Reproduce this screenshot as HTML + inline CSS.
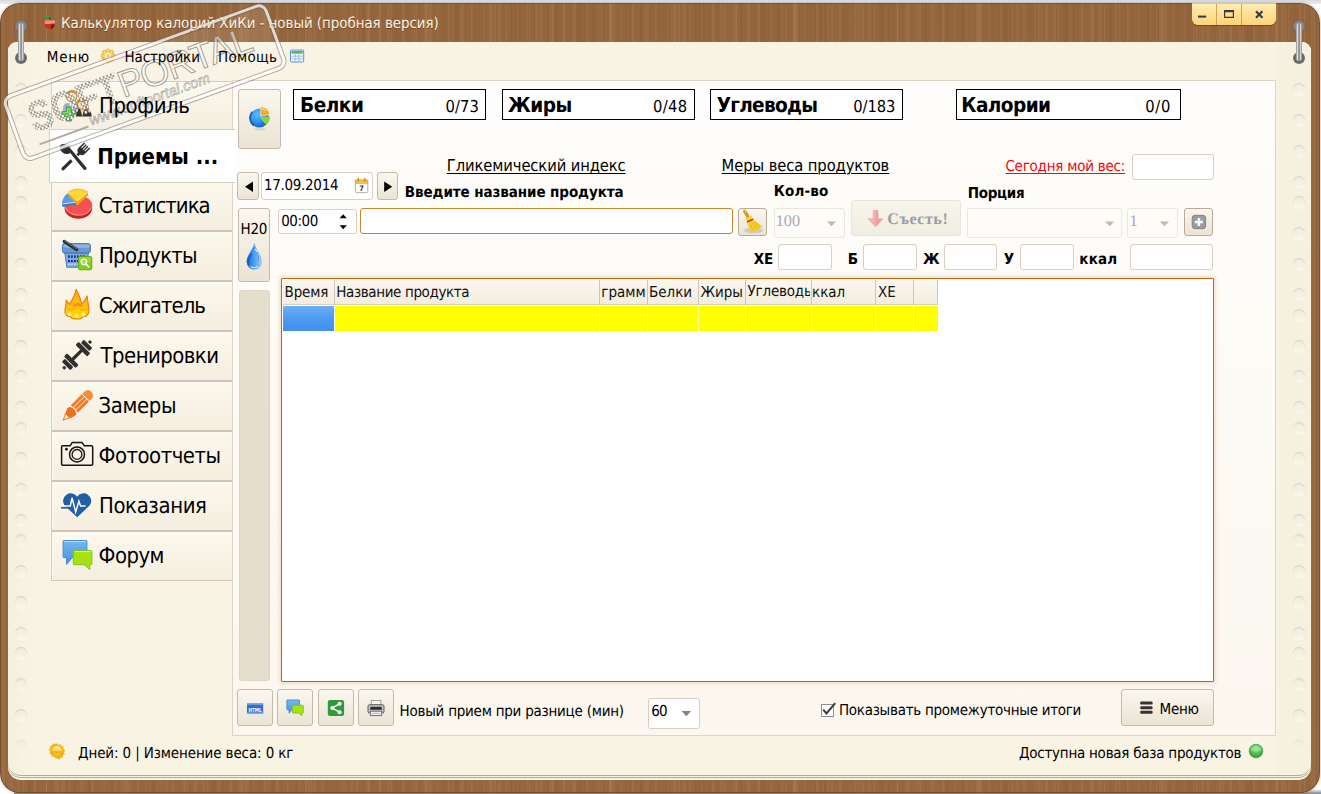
<!DOCTYPE html>
<html lang="ru"><head><meta charset="utf-8"><title>Калькулятор калорий ХиКи</title>
<style>
html,body{margin:0;padding:0}
body{width:1321px;height:794px;position:relative;overflow:hidden;background:#fff;font-family:"DejaVu Sans Condensed","DejaVu Sans","Liberation Sans",sans-serif;font-size:14.5px;color:#000;text-rendering:geometricPrecision}
.a{position:absolute;box-sizing:border-box}
.t{position:absolute;white-space:nowrap}
#win{left:0;top:3px;width:1320px;height:789.5px;border-radius:20px;
 background:
 repeating-linear-gradient(90deg,rgba(255,225,175,.07) 0 1px,transparent 1px 5px,rgba(70,35,10,.05) 5px 6px,transparent 6px 11px,rgba(255,225,175,.06) 11px 13px,transparent 13px 19px,rgba(70,35,10,.045) 19px 20px,transparent 20px 23px),
 repeating-linear-gradient(90deg,rgba(70,35,10,.05) 0 2px,transparent 2px 9px,rgba(255,225,175,.07) 9px 10px,transparent 10px 17px,rgba(255,225,175,.05) 17px 20px,transparent 20px 29px,rgba(70,35,10,.04) 29px 31px,transparent 31px 37px),
 repeating-linear-gradient(90deg,rgba(255,225,175,.05) 0 5px,transparent 5px 27px,rgba(70,35,10,.045) 27px 33px,transparent 33px 61px),
 linear-gradient(#95663D,#96683F);
 box-shadow:inset 1px 0 0 rgba(70,40,15,.45),inset -1px 0 0 rgba(70,40,15,.35),inset 0 -1px 0 rgba(70,40,15,.4),inset 0 1px 0 rgba(70,40,15,.35),0 0 3px rgba(60,60,80,.45)}
.sheet{left:8px;top:42px;width:1303px;background:#F6F1E0}
.dim{position:absolute;width:12px;height:12px;border-radius:50%;background:linear-gradient(#EFEBDD 0,#F3EFE2 35%,#F5F1E5 70%,#FBF8EF 100%);box-shadow:inset 0 1px 1px rgba(170,160,135,.35),0 1px 0 rgba(255,255,255,.6)}
.tab{position:absolute;left:51px;width:181px;height:50px;box-sizing:border-box;border:1px solid #CEC4BC;border-left-color:#D3CBC3;border-right:none;background:linear-gradient(#FBF8EC,#F5EEDF);box-shadow:inset 1px 1px 0 #FCFAF2,-1px 0 0 rgba(255,255,255,.35)}
.btn{position:absolute;box-sizing:border-box;border:1px solid #C4B9AC;border-radius:3px;background:linear-gradient(#FAF7EE,#EBE4D4)}
.fld{position:absolute;box-sizing:border-box;border:1px solid #D9CEC3;border-radius:3px;background:#fff}
.dis{position:absolute;box-sizing:border-box;border:1px solid #ECE7DD;border-radius:3px;background:#FDFCF9}
.box{position:absolute;box-sizing:border-box;border:1px solid #000;background:#fff}
.vd{position:absolute;top:280px;width:1px;height:25px;background:#CFC5B8}
.yd{position:absolute;top:306px;width:1px;height:25px;background:#FFFF8C}

</style></head>
<body>
<div class="a" style="left:0;top:0;width:1321px;height:4px;background:linear-gradient(#dadada,#ececec)"></div>
<div class="a" style="left:14px;top:789px;width:1307px;height:5px;background:linear-gradient(#fff 0,#bdbdc0 55%,#8e8e92 80%)"></div>
<div class="a" id="win"></div>
<div class="a sheet" style="height:738px;border-radius:9px 9px 13px 13px"></div>
<div class="a sheet" style="height:736px;border-radius:9px 9px 13px 13px;border-bottom:1px solid #B3AB9B"></div>
<div class="a sheet" style="height:733.7px;border-radius:9px 9px 13px 13px;border-bottom:1px solid #B3AB9B;background:linear-gradient(90deg,#F5F0DE 0,#F8F3E3 30px,#F8F3E3 1268px,#F6F0DF 1272px)"></div>
<div class="a" style="left:15px;top:20px;width:12px;height:12px;border-radius:50%;background:radial-gradient(#7c7c7c 0,#858585 55%,#6a5a48 100%);box-shadow:0 0 1px #4a3018"></div>
<div class="a" style="left:15px;top:52px;width:12px;height:12px;border-radius:50%;background:radial-gradient(#5e5e5e 0,#6b6b6b 60%,#8f8a80 100%)"></div>
<div class="a" style="left:18px;top:23px;width:6px;height:38px;border-radius:3px;background:linear-gradient(90deg,#7d7d7d 0,#e6e6e6 22%,#a0a0a0 42%,#6f6f6f 52%,#dedede 72%,#8a8a8a 100%)"></div>
<div class="a" style="left:1293px;top:20px;width:12px;height:12px;border-radius:50%;background:radial-gradient(#7c7c7c 0,#858585 55%,#6a5a48 100%);box-shadow:0 0 1px #4a3018"></div>
<div class="a" style="left:1293px;top:52px;width:12px;height:12px;border-radius:50%;background:radial-gradient(#5e5e5e 0,#6b6b6b 60%,#8f8a80 100%)"></div>
<div class="a" style="left:1296px;top:23px;width:6px;height:38px;border-radius:3px;background:linear-gradient(90deg,#7d7d7d 0,#e6e6e6 22%,#a0a0a0 42%,#6f6f6f 52%,#dedede 72%,#8a8a8a 100%)"></div>
<div class="dim" style="left:15px;top:82.8px"></div>
<div class="dim" style="left:15px;top:113.7px"></div>
<div class="dim" style="left:15px;top:144.6px"></div>
<div class="dim" style="left:15px;top:175.5px"></div>
<div class="dim" style="left:15px;top:195.7px"></div>
<div class="dim" style="left:15px;top:226.6px"></div>
<div class="dim" style="left:15px;top:257.5px"></div>
<div class="dim" style="left:15px;top:288.4px"></div>
<div class="dim" style="left:15px;top:308.6px"></div>
<div class="dim" style="left:15px;top:339.5px"></div>
<div class="dim" style="left:15px;top:370.4px"></div>
<div class="dim" style="left:15px;top:401.3px"></div>
<div class="dim" style="left:15px;top:421.5px"></div>
<div class="dim" style="left:15px;top:452.4px"></div>
<div class="dim" style="left:15px;top:483.3px"></div>
<div class="dim" style="left:15px;top:514.2px"></div>
<div class="dim" style="left:15px;top:534.4px"></div>
<div class="dim" style="left:15px;top:565.3px"></div>
<div class="dim" style="left:15px;top:596.2px"></div>
<div class="dim" style="left:15px;top:627.1px"></div>
<div class="dim" style="left:15px;top:647.3px"></div>
<div class="dim" style="left:15px;top:678.2px"></div>
<div class="dim" style="left:15px;top:709.1px"></div>
<div class="dim" style="left:15px;top:740.0px;opacity:.45"></div>
<div class="dim" style="left:1293px;top:82.8px"></div>
<div class="dim" style="left:1293px;top:113.7px"></div>
<div class="dim" style="left:1293px;top:144.6px"></div>
<div class="dim" style="left:1293px;top:175.5px"></div>
<div class="dim" style="left:1293px;top:195.7px"></div>
<div class="dim" style="left:1293px;top:226.6px"></div>
<div class="dim" style="left:1293px;top:257.5px"></div>
<div class="dim" style="left:1293px;top:288.4px"></div>
<div class="dim" style="left:1293px;top:308.6px"></div>
<div class="dim" style="left:1293px;top:339.5px"></div>
<div class="dim" style="left:1293px;top:370.4px"></div>
<div class="dim" style="left:1293px;top:401.3px"></div>
<div class="dim" style="left:1293px;top:421.5px"></div>
<div class="dim" style="left:1293px;top:452.4px"></div>
<div class="dim" style="left:1293px;top:483.3px"></div>
<div class="dim" style="left:1293px;top:514.2px"></div>
<div class="dim" style="left:1293px;top:534.4px"></div>
<div class="dim" style="left:1293px;top:565.3px"></div>
<div class="dim" style="left:1293px;top:596.2px"></div>
<div class="dim" style="left:1293px;top:627.1px"></div>
<div class="dim" style="left:1293px;top:647.3px"></div>
<div class="dim" style="left:1293px;top:678.2px"></div>
<div class="dim" style="left:1293px;top:709.1px"></div>
<div class="dim" style="left:1293px;top:740.0px;opacity:.45"></div>
<div class="a" style="left:1191.5px;top:3px;width:84px;height:22px;border-radius:0 0 6px 6px;background:linear-gradient(#FFEDB4,#FFE08F 55%,#FBD27C);box-shadow:0 1px 0 rgba(90,55,20,.55),inset 0 1px 0 rgba(120,80,30,.25)"></div>
<div class="a" style="left:1216px;top:4px;width:1px;height:21px;background:#C9A460"></div>
<div class="a" style="left:1241.4px;top:4px;width:1px;height:21px;background:#C9A460"></div>
<div class="a" style="left:232px;top:79.5px;width:1043.5px;height:656px;background:linear-gradient(#FEFDFB,#FDFBF6 40%,#FBF7EF);border:1px solid #DED4C6"></div>
<div class="tab" style="top:81px"></div>
<div class="tab" style="top:181px"></div>
<div class="tab" style="top:231px"></div>
<div class="tab" style="top:281px"></div>
<div class="tab" style="top:331px"></div>
<div class="tab" style="top:381px"></div>
<div class="tab" style="top:431px"></div>
<div class="tab" style="top:481px"></div>
<div class="tab" style="top:531px"></div>
<div class="a" style="left:48.8px;top:128.8px;width:186px;height:53.8px;background:#fff;border:1px solid #D6CCBF;border-right:none"></div>
<div class="btn" style="left:238px;top:89px;width:42.5px;height:59.5px"></div>
<div class="box" style="left:292.9px;top:89.2px;width:193.0px;height:30.8px"></div>
<div class="box" style="left:502.3px;top:89.2px;width:192.5px;height:30.8px"></div>
<div class="box" style="left:710px;top:89.2px;width:193.1px;height:30.8px"></div>
<div class="box" style="left:956.1px;top:89.2px;width:224.8px;height:30.8px"></div>
<div class="fld" style="left:1132.3px;top:154.2px;width:81.4px;height:25.5px"></div>
<div class="btn" style="left:237.2px;top:172.2px;width:21.6px;height:27.6px"></div>
<div class="fld" style="left:261.2px;top:172.2px;width:111.8px;height:27.6px"></div>
<div class="btn" style="left:376.6px;top:172.2px;width:21px;height:27.6px"></div>
<div class="btn" style="left:238.2px;top:208.2px;width:31.4px;height:73.4px"></div>
<div class="fld" style="left:278.3px;top:208.5px;width:79px;height:25.3px"></div>
<div class="a" style="left:360.2px;top:208.4px;width:373.3px;height:25.5px;background:#fff;border:1.3px solid #C9842F;border-radius:3px"></div>
<div class="btn" style="left:738.1px;top:208px;width:29px;height:28px;border-color:#B9AB9B"></div>
<div class="dis" style="left:773.5px;top:208.1px;width:71px;height:30.3px"></div>
<div class="a" style="left:851.1px;top:199.6px;width:109.5px;height:36px;background:linear-gradient(#F7F4EB,#F2EDE2);border:1px solid #E9E4DA;border-radius:3px"></div>
<div class="dis" style="left:966.5px;top:208.1px;width:155.8px;height:30.3px"></div>
<div class="dis" style="left:1127.2px;top:208.1px;width:50.6px;height:30.3px"></div>
<div class="btn" style="left:1184px;top:208px;width:28.8px;height:27.8px;border-color:#B9AB9B"></div>
<div class="fld" style="left:778.3px;top:244px;width:53.5px;height:25.6px"></div>
<div class="fld" style="left:863px;top:244px;width:53.8px;height:25.6px"></div>
<div class="fld" style="left:944.2px;top:244px;width:53.2px;height:25.6px"></div>
<div class="fld" style="left:1020px;top:244px;width:53.7px;height:25.6px"></div>
<div class="fld" style="left:1130px;top:244px;width:82.8px;height:25.6px"></div>
<div class="a" style="left:239px;top:290.4px;width:30.6px;height:391px;background:#E5DECD;border:1px solid #DDD5C4;border-radius:3px"></div>
<div class="a" style="left:281px;top:278px;width:933px;height:404px;background:#fff;border:1px solid #C4660F;border-radius:1px;box-shadow:0 0 4px 1px rgba(228,150,90,.38)"></div>
<div class="a" style="left:283px;top:280px;width:654.5px;height:25.3px;background:linear-gradient(#FAF7EE,#F3EDDF);border-bottom:1px solid #D9D0C2"></div>
<div class="vd" style="left:334px"></div>
<div class="vd" style="left:599.3px"></div>
<div class="vd" style="left:647px"></div>
<div class="vd" style="left:698.3px"></div>
<div class="vd" style="left:745.2px"></div>
<div class="vd" style="left:810.6px"></div>
<div class="vd" style="left:875.2px"></div>
<div class="vd" style="left:913.3px"></div>
<div class="vd" style="left:937px"></div>
<div class="a" style="left:283px;top:306px;width:51px;height:25px;background:linear-gradient(#6DB0F6,#4E9CF1 45%,#3F90EE)"></div>
<div class="a" style="left:335px;top:306px;width:602.5px;height:25px;background:#FFFF00"></div>
<div class="yd" style="left:599.3px"></div>
<div class="yd" style="left:647px"></div>
<div class="yd" style="left:698.3px"></div>
<div class="yd" style="left:745.2px"></div>
<div class="yd" style="left:810.6px"></div>
<div class="yd" style="left:875.2px"></div>
<div class="yd" style="left:913.3px"></div>
<div class="a" style="left:747px;top:283px;width:63.3px;height:20px;overflow:hidden"><span class="t" style="left:.6px;top:1.3px;font-size:15px;line-height:15px;letter-spacing:-.2px;color:#111">Углеводы</span></div>
<div class="btn" style="left:237.2px;top:689.3px;width:35.4px;height:36.5px"></div>
<div class="btn" style="left:277.3px;top:689.3px;width:35.4px;height:36.5px"></div>
<div class="btn" style="left:318.4px;top:689.3px;width:35.2px;height:36.5px"></div>
<div class="btn" style="left:358.3px;top:689.3px;width:35.4px;height:36.5px"></div>
<div class="fld" style="left:648.4px;top:698.4px;width:51.2px;height:30.2px"></div>
<div class="a" style="left:821px;top:704px;width:13px;height:13px;background:#fff;border:1px solid #8E8E8E"></div>
<div class="btn" style="left:1121.3px;top:689.3px;width:92.8px;height:36.5px"></div><svg class="a" style="left:0;top:0" width="1321" height="794" viewBox="0 0 1321 794">
<defs>
<linearGradient id="gFlame" x1="0" y1="0" x2="0" y2="1"><stop offset="0" stop-color="#FFA80C"/><stop offset=".6" stop-color="#FFBE10"/><stop offset="1" stop-color="#FFE000"/></linearGradient>
<linearGradient id="gBlueB" x1="0" y1="0" x2="0" y2="1"><stop offset="0" stop-color="#73B7F2"/><stop offset="1" stop-color="#4893DD"/></linearGradient>
<radialGradient id="gPie" cx=".4" cy=".3" r=".8"><stop offset="0" stop-color="#63BBFF"/><stop offset=".55" stop-color="#2590F5"/><stop offset="1" stop-color="#0E50B5"/></radialGradient>
<linearGradient id="gDrop" x1="0" y1="0" x2="1" y2="0"><stop offset="0" stop-color="#1565D8"/><stop offset=".5" stop-color="#4CA0F0"/><stop offset="1" stop-color="#9BD0F8"/></linearGradient>
<radialGradient id="gDot" cx=".5" cy=".3" r=".7"><stop offset="0" stop-color="#9BE59B"/><stop offset=".5" stop-color="#5DC25D"/><stop offset="1" stop-color="#2F9238"/></radialGradient>
<linearGradient id="gSun" x1="0" y1="0" x2="0" y2="1"><stop offset="0" stop-color="#FFF0A0"/><stop offset=".5" stop-color="#FFD84A"/><stop offset=".55" stop-color="#F2B010"/><stop offset="1" stop-color="#F8C838"/></linearGradient>
</defs>

<!-- window control glyphs -->
<g fill="#37384A" stroke="none">
<rect x="1198" y="15.6" width="8.2" height="2"/>
<path d="M1224 10h10v8h-10zM1225.2 12.2v4.6h7.6v-4.6z" fill-rule="evenodd"/>
<path d="M1255.2 11.9l1.5-1.5 2.5 2.5 2.5-2.5 1.5 1.5-2.5 2.5 2.5 2.5-1.5 1.5-2.5-2.5-2.5 2.5-1.5-1.5 2.5-2.5z"/>
</g>

<!-- apple -->
<path d="M43.6 16.4q2.6-2.4 5.6-.8 1.600 1.200 1.300 3.200-4.200.6-6.900-2.400z" fill="#2EA336"/>
<path d="M50.300 19.800l-.9-2.600" stroke="#4a3018" stroke-width="1" fill="none"/>
<path d="M44 21.500q0-1.600 1.800-1.600h7.600q1.800 0 1.800 1.600 0 5.600-3.300 7.200h-4.600q-3.300-1.600-3.300-7.200z" fill="#C2361E"/>
<path d="M44.600 20.300h6.600v3.600h-6.400z" fill="#F58A86"/>
<path d="M51.200 20.300h3.700v3.200h-3.700z" fill="#D6A98B"/>
<path d="M51 24.500h4q-.6 3-2.600 4.200h-2.200q1.200-2 .8-4.200z" fill="#8E1410"/>

<!-- gear/flower menu icon -->
<g transform="translate(108,55.800)">
<g fill="#FAD978" stroke="#E2A227" stroke-width=".8">
<circle cx="0" cy="-5" r="1.900"/><circle cx="3.540" cy="-3.540" r="1.900"/><circle cx="5" cy="0" r="1.900"/><circle cx="3.540" cy="3.540" r="1.900"/>
<circle cx="0" cy="5" r="1.900"/><circle cx="-3.540" cy="3.540" r="1.900"/><circle cx="-5" cy="0" r="1.900"/><circle cx="-3.540" cy="-3.540" r="1.900"/>
</g>
<circle r="4.200" fill="#F7D060"/>
<circle r="2.700" fill="#FFFDF4"/>
<circle r="1.200" fill="#FFF6E0" stroke="#E8923A" stroke-width=".8"/>
</g>

<!-- table menu icon -->
<rect x="290.500" y="50" width="13.200" height="12" rx="1" fill="#EEF5FF" stroke="#5C93DD" stroke-width="1"/>
<rect x="291.500" y="51" width="11.200" height="2.600" fill="#58B65A"/>
<path d="M291.500 56.200h11.200M291.500 58.800h11.200M295.200 54v7.500M299 54v7.500" stroke="#8DB6EA" stroke-width=".8" fill="none"/>

<!-- profile icon -->
<path d="M63 114v-5.500q0-5.500 5.500-5.500h6q4.500 0 5 4v7z" fill="#95A3DA"/>
<path d="M69.500 103h5l-1 8h-3z" fill="#F3F3F8"/>
<circle cx="71.600" cy="96.500" r="5.200" fill="#F8E6CF" stroke="#BF8A38" stroke-width="1.200"/>
<path d="M66.200 96q.5-6 5.800-6.200 5 .2 5.400 6-2.600-3.200-5.600-3-3 .2-5.600 3.200z" fill="#C68A2E"/>
<path d="M73.500 116.500q.2-8 6.500-8h4.500q6.800 0 7.300 8z" fill="#1C1C1C"/>
<circle cx="82.300" cy="104.300" r="5" fill="#F6DDBF" stroke="#B07A2A" stroke-width="1.300"/>
<path d="M76.500 107q-1.200-9 5.800-9.200 7 .2 6 9.200-1-5.200-6-5.400-4.800.2-5.800 5.400z" fill="#BC842C"/>
<path d="M76.200 105.500q-1.500 3 .3 5.500l2-1.500zM88.400 105.500q1.500 3-.3 5.500l-2-1.500z" fill="#A8742A"/>
<path d="M80.300 109.300h4l-2 7.200z" fill="#F5CB7A"/>
<path d="M66.500 106.800h5v4.700h4.700v4.800h-4.700v4.700h-5v-4.700h-4.600v-4.800h4.600z" fill="#43BC3C" stroke="#2C8E2A" stroke-width=".8"/>
<path d="M67.600 108v4.700h-4.500M69 108v12" stroke="#9BE87E" stroke-width=".9" fill="none" opacity=".8"/>

<!-- spoon & fork -->
<g fill="#2E2E2E" stroke="none">
<ellipse cx="65.300" cy="149" rx="6.200" ry="4.300" transform="rotate(38 65.300 149)"/>
<path d="M68.200 150.600l2.300-2.200 15.600 18.800q1 1.600-.2 2.500-1.300.8-2.500-.4z"/>
<g transform="translate(77,154.900) rotate(45)">
<path d="M-.9 0v-2.500q-3-.8-3-4.500v-8h1.500v6.200h1v-6.200h1.400v6.200h1v-6.200h1.400v6.200h1v-6.200h1.500v8q0 3.700-3 4.500v2.500z" transform="scale(1 .92)"/>
<path d="M-1.600 7.600h3.200v12.300q0 1.400-1.600 1.400-1.600 0-1.600-1.400z"/>
</g>
</g>
<path d="M60.500 148.300l9.800-3.600" stroke="#777" stroke-width="2" fill="none" opacity=".75"/>

<!-- statistics pie -->
<ellipse cx="78.400" cy="208.300" rx="13.800" ry="10.400" fill="#CF2020"/>
<ellipse cx="78.400" cy="205.600" rx="13.800" ry="10" fill="#F45252"/>
<path d="M65.500 207.500q3 7.500 13 7.700 10-.2 13-7.700" fill="none" stroke="#FFC0B8" stroke-width=".8" opacity=".8"/>
<path d="M58 190H88.500V192.500L77 203.800 58 206z" fill="#F8F3E6"/>
<path d="M62.200 205.500q-.4-7 5.200-11.800l9.400 8v3l-14.300 2.300z" fill="#3F7CC6"/>
<path d="M62.200 203.600q0-6 5.200-10.200l9.400 8.300-14.600 2z" fill="#5A9DE0"/>
<path d="M63 203.900l13.800-1.900" stroke="#DDEBFA" stroke-width=".9" fill="none"/>
<path d="M68.300 192.300l9 8.500 10.700-8.500v3.200l-10.700 10-9-10z" fill="#F3A21C"/>
<path d="M68.300 192.300q9.500-6.600 19.700 0l-10.700 9.500z" fill="#FFD62A"/>
<path d="M68.800 192.500l8.500 8.300 10.200-8.300" stroke="#FFF3B0" stroke-width=".7" fill="none"/>
<path d="M68.600 192q9.400-5.800 19.200 0" stroke="#F7A51E" stroke-width=".8" fill="none"/>

<!-- products basket -->
<path d="M64.800 253h23.600l-2 14.300h-19.600z" fill="#7FAADF" stroke="#4A79B6" stroke-width=".9"/>
<g fill="#27348E">
<rect x="68" y="255.300" width="1.800" height="2.600"/><rect x="71" y="255.300" width="1.800" height="2.600"/><rect x="74" y="255.300" width="1.800" height="2.600"/><rect x="77" y="255.300" width="1.800" height="2.600"/><rect x="80" y="255.300" width="1.800" height="2.600"/><rect x="83" y="255.300" width="1.800" height="2.600"/>
<rect x="68" y="260" width="1.800" height="2.200" fill="#1A1FA0"/><rect x="71" y="260" width="1.800" height="2.200" fill="#1A1FA0"/><rect x="74" y="260" width="1.800" height="2.200" fill="#1A1FA0"/><rect x="77" y="260" width="1.800" height="2.200" fill="#1A1FA0"/>
</g>
<g fill="#E4EDF9"><rect x="68" y="263.600" width="1.800" height="1.200"/><rect x="71" y="263.600" width="1.800" height="1.200"/><rect x="74" y="263.600" width="1.800" height="1.200"/><rect x="77" y="263.600" width="1.800" height="1.200"/></g>
<rect x="62.400" y="243.600" width="28" height="9.400" rx="2.200" fill="#6898D0" stroke="#3F6FAE" stroke-width=".9"/>
<rect x="63.400" y="244.600" width="26" height="3.200" rx="1.400" fill="#8DB5E6"/>
<path d="M64.200 241.400l12.600 8.200" stroke="#2B2B2B" stroke-width="3.200" stroke-linecap="round" fill="none"/>
<path d="M64.600 240.800l12.400 8.100" stroke="#8C8C8C" stroke-width=".8" stroke-linecap="round" fill="none"/>
<rect x="78.400" y="256.400" width="13.400" height="13.400" rx="1.600" fill="#80CC18" stroke="#5EA612" stroke-width=".9"/>
<rect x="79.300" y="257.300" width="11.600" height="5.200" fill="#9ADB34" opacity=".8"/>
<circle cx="83.900" cy="261.900" r="2.700" fill="#A4DE50" stroke="#fff" stroke-width="1.300"/>
<path d="M86 264.100l2.900 2.900" stroke="#fff" stroke-width="1.600" stroke-linecap="round"/>

<!-- flame -->
<path d="M76.200 318.700c-3.600.8-5.800-1-5.700-2.500-3.200 1.200-6-2-5.500-6.200.5-4 1.600-6 1-9.800l3.600 3.900c2.500-4 5.400-8.800 6.500-14.900 2.700 5 4.800 10.700 5.800 15 2-2 4-5 5.200-8.200.4 6 2.300 10 1.800 15-.4 4-3 6.500-5.600 5.200-.5 1.900-3.500 3.300-7.100 2.500z" fill="url(#gFlame)" stroke="#EA7C0E" stroke-width="1.100" stroke-linejoin="round"/>
<path d="M72 307c2-3 4-4.500 6.500-4 2.500.8 3.500 2.700 5 3-2 1-3.500.5-5 0-2-.6-3.500.2-6.500 1z" fill="#F48A12" opacity=".85"/>
<path d="M68 309c3 1.200 5 .8 7 0M80 309.500c2 .8 4 .5 6-.5" stroke="#F59A18" stroke-width="1" fill="none" opacity=".8"/>
<circle cx="69.600" cy="314.300" r="2" fill="#FFF27A"/><circle cx="76.400" cy="316" r="2.100" fill="#FFF27A"/><circle cx="83.400" cy="314.600" r="2" fill="#FFF27A"/>

<!-- dumbbell -->
<g transform="translate(77.100,354.900) rotate(-45)" fill="#2F2F2F">
<rect x="-6.500" y="-1.600" width="13" height="3.200"/>
<rect x="6" y="-8.200" width="4.400" height="16.400" rx="1.100"/><rect x="-10.400" y="-8.200" width="4.400" height="16.400" rx="1.100"/>
<rect x="11.300" y="-6" width="4.300" height="12" rx="1.100"/><rect x="-15.600" y="-6" width="4.300" height="12" rx="1.100"/>
<rect x="16.700" y="-1.600" width="3" height="3.200" rx=".9"/><rect x="-19.700" y="-1.600" width="3" height="3.200" rx=".9"/>
</g>

<!-- pencil -->
<g transform="translate(77,406.300) rotate(-45)">
<path d="M-20.500 0l9.500-4.400q3-1.300 5.200-.6 1.600 2.600 1.600 5t-1.600 5q-2.200.7-5.200-.6z" fill="#EE701C"/>
<path d="M-18.300 0l4.600-2.100v4.200z" fill="#FFF6EA"/>
<rect x="-3.600" y="-5.100" width="15.400" height="3" fill="#F17C24"/>
<rect x="-2.800" y="-1.500" width="14.600" height="3" fill="#F17C24"/>
<rect x="-3.600" y="2.100" width="15.400" height="3" fill="#F17C24"/>
<path d="M12.700-5.100h2.700a5.100 5.100 0 0 1 0 10.200h-2.700z" fill="#F78B3C"/>
</g>

<!-- camera -->
<g fill="none" stroke="#141414" stroke-width="1.500" stroke-linejoin="round">
<path d="M62.800 445.800h7.200l2.200-3.200h9.900l2.200 3.200h7.200q1.200 0 1.200 1.200v17q0 1.200-1.200 1.200h-28.700q-1.200 0-1.200-1.200v-17q0-1.200 1.200-1.200z"/>
<circle cx="77" cy="454.400" r="7.500"/><circle cx="77" cy="454.400" r="4.900" stroke-width="1.300"/>
</g>
<circle cx="66.400" cy="449.200" r="1.400" fill="#141414"/>

<!-- heart -->
<path d="M77.150 517.300l-12.700-12a7.500 7.500 0 1 1 12.700-8.600 7.500 7.500 0 1 1 12.700 8.600z" fill="#1F5FA6"/>
<path d="M61 507.800h8" stroke="#1F5FA6" stroke-width="1.700" fill="none"/>
<path d="M63.500 506.100h6.800l1.700-8.300 3.700 14.200 3.200-10.800 1.700 4.900h5" stroke="#FCF8EE" stroke-width="1.500" fill="none" stroke-linejoin="miter"/>

<!-- forum -->
<path d="M64 540.500h22q.9 0 .9.900v15.400q0 .9-.9.900h-13.800l-5.700 6.800v-6.800h-2.500q-.9 0-.9-.9v-15.400q0-.9.900-.9z" fill="url(#gBlueB)" stroke="#3B86D2" stroke-width=".9"/>
<path d="M64.300 541.600h21.400" stroke="#CFE5FA" stroke-width=".8"/>
<path d="M74.200 550.500h16.800q.9 0 .9.900v12.400q0 .9-.9.900h-1.300v4.900l-5.600-4.900h-9.900q-.9 0-.9-.9v-12.400q0-.9.900-.9z" fill="#A7E112" stroke="#7DBE20" stroke-width=".9"/>
<path d="M74.400 551.600h16.300" stroke="#E4F7A8" stroke-width=".8"/>

<!-- pie button icon -->
<ellipse cx="259.800" cy="129.300" rx="6" ry="1" fill="#bbb" opacity=".5"/>
<circle cx="259.300" cy="118.100" r="9.500" fill="url(#gPie)"/>
<path d="M252.300 111.700a9.500 9.500 0 0 0 1.500 14" stroke="#0B3FA0" stroke-width="1.500" fill="none" opacity=".8"/>
<path d="M259.800 117.300l10-1a9.500 9.500 0 0 1-3.600 8.600z" fill="#8CD630"/>
<path d="M260.600 116.200l.3-9.700q7 .8 9.100 7.900z" fill="#F7A822" stroke="#F4F0E2" stroke-width=".7"/>
<path d="M262 108.200l3.500 2.600" stroke="#FFD980" stroke-width="1.200"/>

<!-- prev/next arrows -->
<path d="M253 181.600v10.400l-8-5.200z" fill="#000"/>
<path d="M384.200 181.600v10.400l8-5.200z" fill="#000"/>
<!-- calendar icon -->
<rect x="355.400" y="180" width="12.400" height="12.600" rx="1" fill="#fff" stroke="#A9A9A9" stroke-width=".9"/>
<rect x="355.400" y="180" width="12.400" height="3.400" fill="#F6C244" stroke="#D9A02A" stroke-width=".6"/>
<path d="M358.300 178.200v3M364.900 178.200v3" stroke="#C88A1E" stroke-width="1.300" stroke-linecap="round"/>
<text x="361.600" y="191.300" font-family="'DejaVu Sans Condensed','DejaVu Sans',sans-serif" font-size="7.500" font-weight="700" text-anchor="middle" fill="#3A3A3A">7</text>

<!-- spinner -->
<path d="M339.600 218.300l3.600-4.100 3.600 4.100zM339.600 225.200l3.600 4.100 3.600-4.100z" fill="#000"/>

<!-- water drop -->
<path d="M254.300 242.800c1 7 7.700 12 7.700 18.900a7.700 7.700 0 0 1-15.400 0c0-6.900 6.700-11.900 7.700-18.900z" fill="url(#gDrop)"/>
<path d="M249 264.800c-2.200-4 .5-8 3-11" stroke="#0E4FC0" stroke-width="1.400" fill="none" opacity=".7"/>
<path d="M255.300 249c2.500 4 4.400 7.800 3.600 12.800" stroke="#E8F5FF" stroke-width="1.200" fill="none" opacity=".9"/>
<path d="M250.500 266.500q3.500 2.200 7.500 0" stroke="#D8EEFF" stroke-width="1.100" fill="none" opacity=".9"/>
<path d="M256.600 252c1.800 3.500 2.600 6.500 2 9.500" stroke="#0E50B8" stroke-width=".8" fill="none" opacity=".8"/>

<!-- broom -->
<ellipse cx="753.500" cy="230.300" rx="9.500" ry="3" fill="#9a9a9a" opacity=".35"/>
<path d="M744.700 211.200l3.300 5.600" stroke="#D9941E" stroke-width="3.300" stroke-linecap="round"/>
<path d="M744.900 210.800l1 1.600" stroke="#F6D890" stroke-width="1" stroke-linecap="round"/>
<path d="M745.300 218.500l6-3 1.600 3.100-6.100 2.600z" fill="#F5D232"/>
<path d="M746.800 221.200l6.100-2.600.7 1.500-6.200 2.800z" fill="#D5281A"/>
<path d="M747.400 222.900l6.200-2.800 8.700 6.200q-4.500 5-12.200 5z" fill="#F4CE28"/>
<path d="M750.500 224l2.500 6.500M753 222.800l4 6.500M755.500 222.600l4.500 5" stroke="#F0A21A" stroke-width=".7" fill="none" opacity=".8"/>

<!-- combo arrows -->
<path d="M826.900 221.400h9.200l-4.600 4.800zM1105 221.400h9.400l-4.700 4.800zM1159.800 221.400h9.300l-4.650 4.800z" fill="#BEBCAC"/>
<path d="M681.600 711h9.500l-4.750 5.300z" fill="#8D8171"/>
<!-- eat arrow -->
<path d="M872.900 210.200h5.400v8.300h5.200l-7.900 8.700-7.900-8.700h5.200z" fill="#F19CA0"/>
<path d="M872.900 210.200h2.700v17l-7.900-8.700h5.200z" fill="#F5B0B3"/>
<!-- plus button -->
<rect x="1192.200" y="215.300" width="13.400" height="13.400" rx="2.600" fill="#9C9C9C" stroke="#7C7C7C" stroke-width=".9"/>
<path d="M1197.600 218h2.600v2.700h2.700v2.600h-2.700v2.700h-2.600v-2.700h-2.700v-2.600h2.700z" fill="#F2FAFB"/>

<!-- bottom toolbar icons -->
<rect x="247" y="703.100" width="16.200" height="11" rx=".8" fill="#2E6FD2"/>
<rect x="247" y="703.100" width="16.200" height="1.600" fill="#7FB0F0"/><rect x="247" y="712.500" width="16.200" height="1.600" fill="#7FB0F0"/>
<text x="255.100" y="711.600" font-family="'DejaVu Sans Condensed','DejaVu Sans',sans-serif" font-size="5.600" font-weight="700" text-anchor="middle" textLength="13.200" lengthAdjust="spacingAndGlyphs" fill="#fff">HTML</text>

<path d="M287.400 699.900h11.600q.6 0 .6.600v8.600q0 .6-.6.600h-7l-3 3.500v-3.500h-1.600q-.6 0-.6-.6v-8.600q0-.6.600-.6z" fill="url(#gBlueB)" stroke="#3B86D2" stroke-width=".8"/>
<path d="M293 705.300h9.800q.6 0 .6.600v6.600q0 .6-.6.600h-.9v2.800l-3.200-2.800h-5.700q-.6 0-.6-.6v-6.600q0-.6.600-.6z" fill="#A7E112" stroke="#7DBE20" stroke-width=".8"/>

<rect x="327.800" y="700.100" width="16.300" height="15.800" rx="2.200" fill="#2D9A3C"/>
<path d="M339.400 703.900l-7 4.100 7 4.100" stroke="#fff" stroke-width="1.400" fill="none"/>
<circle cx="339.600" cy="703.800" r="2" fill="#fff"/><circle cx="332.300" cy="708" r="2" fill="#fff"/><circle cx="339.600" cy="712.200" r="2" fill="#fff"/>

<rect x="371.200" y="700.400" width="9.700" height="5.500" fill="#F6F6F6" stroke="#8C8C8C" stroke-width=".8"/>
<rect x="368" y="704.700" width="16" height="8.400" rx="1.600" fill="#C2C2C2" stroke="#4E4E4E" stroke-width=".9"/>
<rect x="370.300" y="706.800" width="11.400" height="3" fill="#2E2E2E"/>
<rect x="370.300" y="711.200" width="11.400" height="4.300" fill="#F2F2F2" stroke="#5A5A5A" stroke-width=".8"/>
<path d="M372 713.400h8" stroke="#999" stroke-width=".7"/>

<!-- checkbox check -->
<path d="M823.200 709.600l3.300 3.900 8.700-10.300" stroke="#3c3c3c" stroke-width="2" fill="none"/>
<!-- hamburger -->
<g fill="#333"><rect x="1140.200" y="701.600" width="12.400" height="3" rx="1.200"/><rect x="1140.200" y="706.200" width="12.400" height="3" rx="1.200"/><rect x="1140.200" y="710.800" width="12.400" height="3" rx="1.200"/></g>

<!-- sun -->
<g transform="translate(57,751)">
<path d="M0-7.700l1.500 1.700 2.300-.9.600 2.300 2.400.2-.5 2.400 2 1.300-1.500 1.900 1.200 2.100-2.200 1 .1 2.400-2.400-.1-1 2.200-2.100-1.200L-1.500 7.400-2.800 5.400-5.200 5.900l-.2-2.400-2.300-.7 1-2.200L-8.300-1.300l1.900-1.400-.7-2.300 2.400-.4.400-2.400 2.300.7z" fill="#F2B41C"/>
<circle r="5.400" fill="url(#gSun)" stroke="#E9A512" stroke-width=".6"/>
</g>
<!-- green dot -->
<circle cx="1256" cy="751" r="6.800" fill="url(#gDot)" stroke="#3A9A44" stroke-width=".8"/>
<path d="M1250.600 750.500a5.500 5.500 0 0 1 10.800 0q-5.400 1.800-10.800 0z" fill="#A6EBA6" opacity=".55"/>
</svg>
<div class="a" id="wm" style="left:-.200px;top:96.800px;width:282px;height:71.400px;transform:rotate(-20deg);transform-origin:0 0;border:1px solid rgba(100,92,82,.5);border-radius:10px;background:rgba(255,255,255,.1)">
<div class="a" style="left:0;top:0;right:0;bottom:0;border:3.300px solid rgba(255,255,255,.72);border-radius:9px"></div>
<div class="a" style="left:3.300px;top:3.300px;right:3.300px;bottom:3.300px;border:.9px solid rgba(100,92,82,.45);border-radius:6px"></div>
<span class="t" style="left:19px;top:9px;font-family:'Liberation Sans',sans-serif;font-weight:700;font-size:41.900px;line-height:41.900px;transform:scaleX(.85);transform-origin:0 0;color:transparent;background:radial-gradient(circle,rgba(255,255,255,.98) 0 1.500px,rgba(125,115,100,.7) 1.600px 2.100px,transparent 2.200px) 0 0/4.500px 4.500px;-webkit-background-clip:text;background-clip:text;-webkit-text-stroke:1.200px transparent">SOFT</span>
<span class="t" style="left:114.500px;top:10.800px;font-family:'Liberation Sans',sans-serif;font-size:37.200px;line-height:37.200px;letter-spacing:-1px;color:rgba(255,255,255,.55);-webkit-text-stroke:1px rgba(115,105,92,.65)">PORTAL</span>
<span class="t" style="left:75px;top:46.300px;font-family:'Liberation Sans',sans-serif;font-style:italic;font-size:14.700px;line-height:14.700px;color:rgba(255,255,255,.8);-webkit-text-stroke:.6px rgba(115,105,92,.65)">www.softportal.com</span>
<div class="a" style="left:20px;top:56.100px;width:52px;height:2.200px;background:rgba(255,255,255,.8);border:.5px solid rgba(115,105,92,.55)"></div>
</div>

<div id="txt">
<span class="t" style="left:61.00px;top:16.04px;font-size:14.9px;line-height:14.9px;color:#FBF2E0;letter-spacing:-0.023px;text-shadow:0 1px 0 rgba(70,40,15,.55)">Калькулятор калорий ХиКи - новый (пробная версия)</span>
<span class="t" style="left:46.80px;top:50.03px;font-size:15.0px;line-height:15.0px;color:#000;letter-spacing:0.741px;">Меню</span>
<span class="t" style="left:124.40px;top:50.03px;font-size:15.0px;line-height:15.0px;color:#000;letter-spacing:-0.080px;">Настройки</span>
<span class="t" style="left:218.00px;top:50.03px;font-size:15.0px;line-height:15.0px;color:#000;letter-spacing:0.309px;">Помощь</span>
<span class="t" style="left:99.00px;top:96.02px;font-size:21.9px;line-height:21.9px;color:#000;letter-spacing:-0.381px;">Профиль</span>
<span class="t" style="left:97.20px;top:147.02px;font-size:21.9px;line-height:21.9px;color:#000;font-weight:700;letter-spacing:0.004px;">Приемы ...</span>
<span class="t" style="left:98.80px;top:196.02px;font-size:21.9px;line-height:21.9px;color:#000;letter-spacing:-0.972px;">Статистика</span>
<span class="t" style="left:99.00px;top:246.02px;font-size:21.9px;line-height:21.9px;color:#000;letter-spacing:-0.700px;">Продукты</span>
<span class="t" style="left:98.80px;top:296.02px;font-size:21.9px;line-height:21.9px;color:#000;letter-spacing:-0.924px;">Сжигатель</span>
<span class="t" style="left:100.60px;top:346.02px;font-size:21.9px;line-height:21.9px;color:#000;letter-spacing:-0.531px;">Тренировки</span>
<span class="t" style="left:98.40px;top:396.02px;font-size:21.9px;line-height:21.9px;color:#000;letter-spacing:-0.335px;">Замеры</span>
<span class="t" style="left:98.50px;top:446.02px;font-size:21.9px;line-height:21.9px;color:#000;letter-spacing:-0.484px;">Фотоотчеты</span>
<span class="t" style="left:99.00px;top:496.02px;font-size:21.9px;line-height:21.9px;color:#000;letter-spacing:-0.368px;">Показания</span>
<span class="t" style="left:98.50px;top:546.02px;font-size:21.9px;line-height:21.9px;color:#000;letter-spacing:-0.539px;">Форум</span>
<span class="t" style="left:300.10px;top:95.03px;font-size:20.6px;line-height:20.6px;color:#000;font-weight:700;letter-spacing:-0.510px;">Белки</span>
<span class="t" style="left:508.00px;top:95.03px;font-size:20.6px;line-height:20.6px;color:#000;font-weight:700;letter-spacing:-0.510px;">Жиры</span>
<span class="t" style="left:716.70px;top:95.03px;font-size:20.6px;line-height:20.6px;color:#000;font-weight:700;letter-spacing:-0.705px;">Углеводы</span>
<span class="t" style="left:961.30px;top:95.03px;font-size:20.6px;line-height:20.6px;color:#000;font-weight:700;letter-spacing:-0.565px;">Калории</span>
<span class="t" style="left:445.60px;top:99.02px;font-size:16.4px;line-height:16.4px;color:#000;letter-spacing:0.090px;">0/73</span>
<span class="t" style="left:653.10px;top:99.02px;font-size:16.4px;line-height:16.4px;color:#000;letter-spacing:0.323px;">0/48</span>
<span class="t" style="left:853.30px;top:99.02px;font-size:16.4px;line-height:16.4px;color:#000;letter-spacing:-0.102px;">0/183</span>
<span class="t" style="left:1145.30px;top:99.02px;font-size:16.4px;line-height:16.4px;color:#000;letter-spacing:0.675px;">0/0</span>
<span class="t" style="left:446.80px;top:158.02px;font-size:16.4px;line-height:16.4px;color:#000;letter-spacing:-0.102px;text-decoration:underline;text-underline-offset:1.5px;text-decoration-thickness:1px">Гликемический индекс</span>
<span class="t" style="left:721.60px;top:158.02px;font-size:16.4px;line-height:16.4px;color:#000;letter-spacing:-0.086px;text-decoration:underline;text-underline-offset:1.5px;text-decoration-thickness:1px">Меры веса продуктов</span>
<span class="t" style="left:1005.40px;top:159.03px;font-size:15.0px;line-height:15.0px;color:#F00A0A;letter-spacing:-0.227px;text-decoration:underline;text-underline-offset:1.5px;text-decoration-thickness:1px">Сегодня мой вес:</span>
<span class="t" style="left:264.00px;top:178.03px;font-size:15.0px;line-height:15.0px;color:#000;letter-spacing:-0.306px;">17.09.2014</span>
<span class="t" style="left:404.80px;top:185.03px;font-size:15.0px;line-height:15.0px;color:#000;font-weight:700;letter-spacing:-0.074px;">Введите название продукта</span>
<span class="t" style="left:773.70px;top:184.03px;font-size:15.0px;line-height:15.0px;color:#000;font-weight:700;letter-spacing:0.193px;">Кол-во</span>
<span class="t" style="left:967.80px;top:186.03px;font-size:15.0px;line-height:15.0px;color:#000;font-weight:700;letter-spacing:-0.317px;">Порция</span>
<span class="t" style="left:240.60px;top:222.03px;font-size:15.0px;line-height:15.0px;color:#000;letter-spacing:-0.318px;">H20</span>
<span class="t" style="left:281.20px;top:214.03px;font-size:15.0px;line-height:15.0px;color:#000;letter-spacing:-0.450px;">00:00</span>
<span class="t" style="left:775.80px;top:213.03px;font-size:16.3px;line-height:16.3px;color:#A9A9B0;font-family:'Liberation Serif','DejaVu Serif',serif;letter-spacing:-0.091px;">100</span>
<span class="t" style="left:887.30px;top:211.03px;font-size:16.2px;line-height:16.2px;color:#9A9DA8;font-family:'Liberation Serif','DejaVu Serif',serif;font-weight:700;letter-spacing:0.482px;">Съесть!</span>
<span class="t" style="left:1129.50px;top:213.03px;font-size:16.3px;line-height:16.3px;color:#A9A9B0;font-family:'Liberation Serif','DejaVu Serif',serif;">1</span>
<span class="t" style="left:753.80px;top:252.03px;font-size:15.0px;line-height:15.0px;color:#000;font-weight:700;letter-spacing:-0.108px;">ХЕ</span>
<span class="t" style="left:847.80px;top:252.03px;font-size:15.0px;line-height:15.0px;color:#000;font-weight:700;">Б</span>
<span class="t" style="left:923.00px;top:252.03px;font-size:15.0px;line-height:15.0px;color:#000;font-weight:700;">Ж</span>
<span class="t" style="left:1003.70px;top:252.03px;font-size:15.0px;line-height:15.0px;color:#000;font-weight:700;">У</span>
<span class="t" style="left:1079.30px;top:252.03px;font-size:15.0px;line-height:15.0px;color:#000;font-weight:700;letter-spacing:0.190px;">ккал</span>
<span class="t" style="left:284.60px;top:285.03px;font-size:15.0px;line-height:15.0px;color:#111;letter-spacing:-0.178px;">Время</span>
<span class="t" style="left:336.30px;top:285.03px;font-size:15.0px;line-height:15.0px;color:#111;letter-spacing:-0.374px;">Название продукта</span>
<span class="t" style="left:601.30px;top:285.03px;font-size:15.0px;line-height:15.0px;color:#111;">грамм</span>
<span class="t" style="left:649.00px;top:285.03px;font-size:15.0px;line-height:15.0px;color:#111;">Белки</span>
<span class="t" style="left:700.40px;top:285.03px;font-size:15.0px;line-height:15.0px;color:#111;">Жиры</span>
<span class="t" style="left:812.00px;top:285.03px;font-size:15.0px;line-height:15.0px;color:#111;">ккал</span>
<span class="t" style="left:878.00px;top:285.03px;font-size:15.0px;line-height:15.0px;color:#111;">ХЕ</span>
<span class="t" style="left:399.50px;top:704.03px;font-size:15.0px;line-height:15.0px;color:#000;letter-spacing:-0.235px;">Новый прием при разнице (мин)</span>
<span class="t" style="left:651.30px;top:704.03px;font-size:15.0px;line-height:15.0px;color:#000;letter-spacing:-0.884px;">60</span>
<span class="t" style="left:838.90px;top:703.03px;font-size:15.0px;line-height:15.0px;color:#000;letter-spacing:-0.265px;">Показывать промежуточные итоги</span>
<span class="t" style="left:1159.60px;top:702.03px;font-size:15.0px;line-height:15.0px;color:#000;letter-spacing:-0.292px;">Меню</span>
<span class="t" style="left:78.00px;top:746.03px;font-size:15.0px;line-height:15.0px;color:#000;letter-spacing:-0.123px;">Дней: 0 | Изменение веса: 0 кг</span>
<span class="t" style="left:1019.00px;top:746.03px;font-size:15.0px;line-height:15.0px;color:#000;letter-spacing:-0.247px;">Доступна новая база продуктов</span>
</div>
</body></html>
